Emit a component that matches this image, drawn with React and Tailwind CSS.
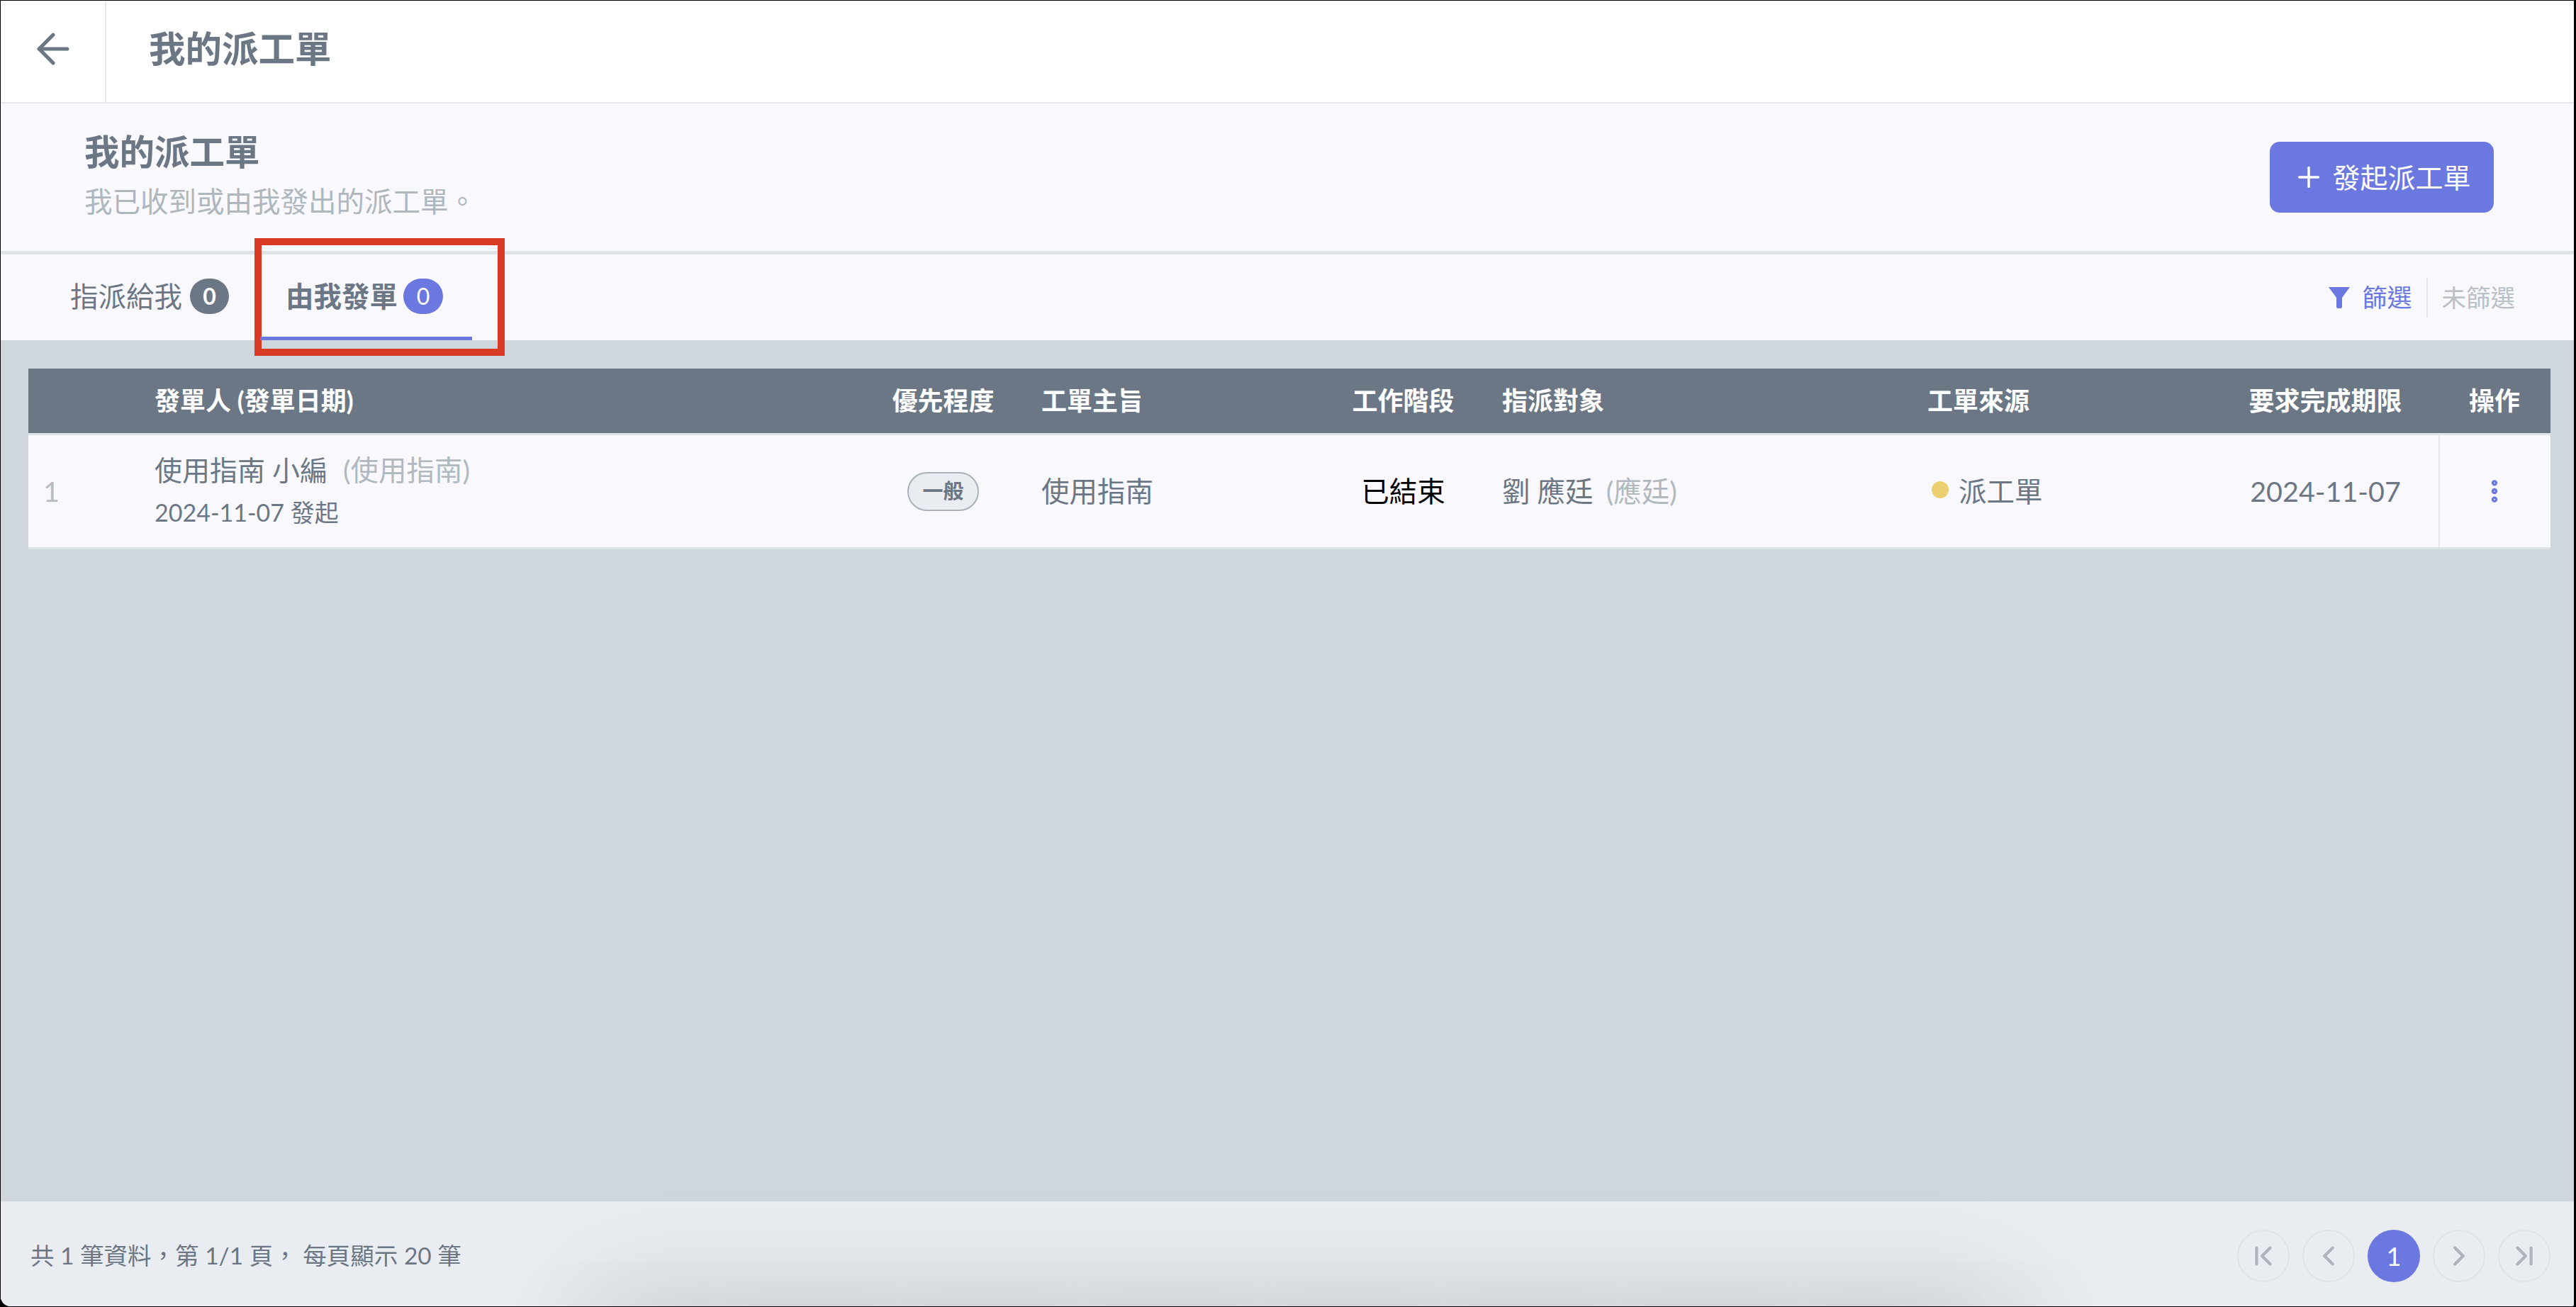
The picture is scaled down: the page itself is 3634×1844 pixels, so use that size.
import { ArrowLeft, ChevronFirst, ChevronLast, ChevronLeft, ChevronRight, EllipsisVertical, Plus } from 'lucide-react'

const columns = 'grid grid-cols-[178px_1022px_181px_468px_181px_651px_400px_319px_158px] items-center'
const pagerButton = 'flex h-[74px] w-[74px] items-center justify-center rounded-full border-2 border-[#dfe3e8] text-[#adb4bc]'

export default function App() {
  return (
    <div className="h-screen bg-black pt-px pr-[3px] pb-px pl-px">
      <div className="relative flex h-full flex-col overflow-hidden rounded-br-[3px] rounded-bl-[14px] bg-[#f8f8fd] font-['Lato','Noto_Sans_CJK_TC',sans-serif] text-[#6c7785]">
        {/* top bar */}
        <header className="flex h-[145px] shrink-0 items-stretch border-b-2 border-[#e4e7eb] bg-white">
          <div className="flex w-[149px] items-center border-r-2 border-[#e4e7eb] pb-[8px] pl-[40px]">
            <ArrowLeft size={68} strokeWidth={1.8} />
          </div>
          <h1 className="ml-[60px] flex items-center pb-[8px] text-[51.5px] font-semibold">我的派工單</h1>
        </header>

        {/* page title */}
        <section className="flex h-[213px] shrink-0 items-center justify-between border-b-[5px] border-[#dde3e6] pr-[113px] pl-[118px]">
          <div className="pt-[2px]">
            <h2 className="text-[49.5px] leading-[66px] font-semibold">我的派工單</h2>
            <p className="text-[39.5px] leading-[74px] text-[#aeb6be]">我已收到或由我發出的派工單。</p>
          </div>
          <button className="flex h-[100px] w-[316px] items-center justify-center gap-[10px] rounded-[14px] bg-[#6b78e0] text-[39px] text-white">
            <Plus size={46} strokeWidth={1.8} />
            發起派工單
          </button>
        </section>

        {/* tabs */}
        <nav className="relative flex h-[121px] shrink-0 items-center pb-[3px]">
          <div className="ml-[98px] flex items-center gap-[11px] text-[39.5px]">
            指派給我
            <span className="flex h-[50px] w-[55px] items-center justify-center rounded-full bg-[#6c7785] text-[32px] font-bold text-white">0</span>
          </div>
          <div className="ml-[80px] flex items-center gap-[8px] text-[39.5px] font-bold">
            由我發單
            <span className="flex h-[50px] w-[56px] items-center justify-center rounded-full bg-[#6b78e0] text-[32px] font-normal text-white">0</span>
          </div>
          <div className="ml-auto flex items-center pt-[3px] pr-[83px]">
            <svg width="30" height="30" viewBox="0 0 30 30" className="fill-[#6b78e0]">
              <path d="M0 0h30L19 15v13a2 2 0 0 1-2 2h-4a2 2 0 0 1-2-2V15z" />
            </svg>
            <span className="ml-[17px] text-[35px] text-[#6b78e0]">篩選</span>
            <span className="mx-[20px] h-[55px] w-[2px] bg-[#e4e7eb]"></span>
            <span className="text-[34.5px] text-[#b9c0c7]">未篩選</span>
          </div>
          {/* red marker round the active tab */}
          <div className="absolute top-[-23px] left-[358px] h-[166px] w-[353px] border-[10px] border-[#d93a26]"></div>
          <div className="absolute bottom-0 left-[366px] h-[5px] w-[299px] bg-[#6b78e0]"></div>
        </nav>

        {/* table area */}
        <main className="min-h-0 flex-1 bg-[#cfd6de] pt-[40px] pl-[39px]">
          <div className="w-[3558px]">
            <div className={`${columns} h-[94px] border-b-[3px] border-[#dde3e6] bg-[#6c7785] pb-[2px] text-[36px] font-bold text-white`}>
              <span></span>
              <span>發單人 (發單日期)</span>
              <span className="text-center">優先程度</span>
              <span className="pl-[48px]">工單主旨</span>
              <span className="text-center">工作階段</span>
              <span className="pl-[49px]">指派對象</span>
              <span className="-ml-[2px]">工單來源</span>
              <span className="text-center">要求完成期限</span>
              <span className="text-center">操作</span>
            </div>
            <div className={`${columns} h-[161px] border-b-[3px] border-[#dde3e6] bg-[#f8f8fd] text-[39.5px]`}>
              <span className="pl-[21px] text-[#b5bcc4]">1</span>
              <div>
                <div className="text-[39px] leading-[60px]">
                  使用指南 小編 <span className="ml-[12px] text-[39.5px] text-[#b0b8c0]">(使用指南)</span>
                </div>
                <div className="text-[34px] leading-[60px]">2024-11-07 發起</div>
              </div>
              <div className="flex justify-center">
                <span className="flex h-[55px] w-[101px] items-center justify-center rounded-full border-2 border-[#a9b2ba] bg-[#e9ecf1] text-[29px] font-bold">一般</span>
              </div>
              <span className="pl-[48px]">使用指南</span>
              <span className="text-center text-black">已結束</span>
              <span className="pl-[49px]">
                劉 應廷 <span className="ml-[8px] text-[#b0b8c0]">(應廷)</span>
              </span>
              <span className="flex items-center gap-[14px] pl-[4px]">
                <span className="mb-[4px] h-[24px] w-[24px] rounded-full bg-[#eccf70]"></span>
                派工單
              </span>
              <span className="text-center">2024-11-07</span>
              <div className="flex h-full items-center justify-center border-l-2 border-[#e4e7eb] pr-[2px] text-[#6b78e0]">
                <EllipsisVertical size={40} strokeWidth={3} />
              </div>
            </div>
          </div>
        </main>

        {/* footer + pager */}
        <footer className="flex h-[148px] shrink-0 items-center justify-between bg-[#e9edf2] pt-[5px] pr-[33px] pl-[42px]">
          <span className="text-[33.5px]">共 1 筆資料，第 1/1 頁， 每頁顯示 20 筆</span>
          <div className="flex items-center gap-[18px]">
            <span className={pagerButton}><ChevronFirst size={46} strokeWidth={2.2} /></span>
            <span className={pagerButton}><ChevronLeft size={46} strokeWidth={2.2} /></span>
            <span className="flex h-[74px] w-[74px] items-center justify-center rounded-full bg-[#6b78e0] text-[36px] text-white">1</span>
            <span className={pagerButton}><ChevronRight size={46} strokeWidth={2.2} /></span>
            <span className={pagerButton}><ChevronLast size={46} strokeWidth={2.2} /></span>
          </div>
        </footer>

        {/* soft shadow rising from the window bottom edge */}
        <div className="absolute right-[790px] bottom-[-300px] left-[830px] h-[300px] shadow-[0_0_170px_0_rgba(0,0,0,0.2)]"></div>
      </div>
    </div>
  )
}
